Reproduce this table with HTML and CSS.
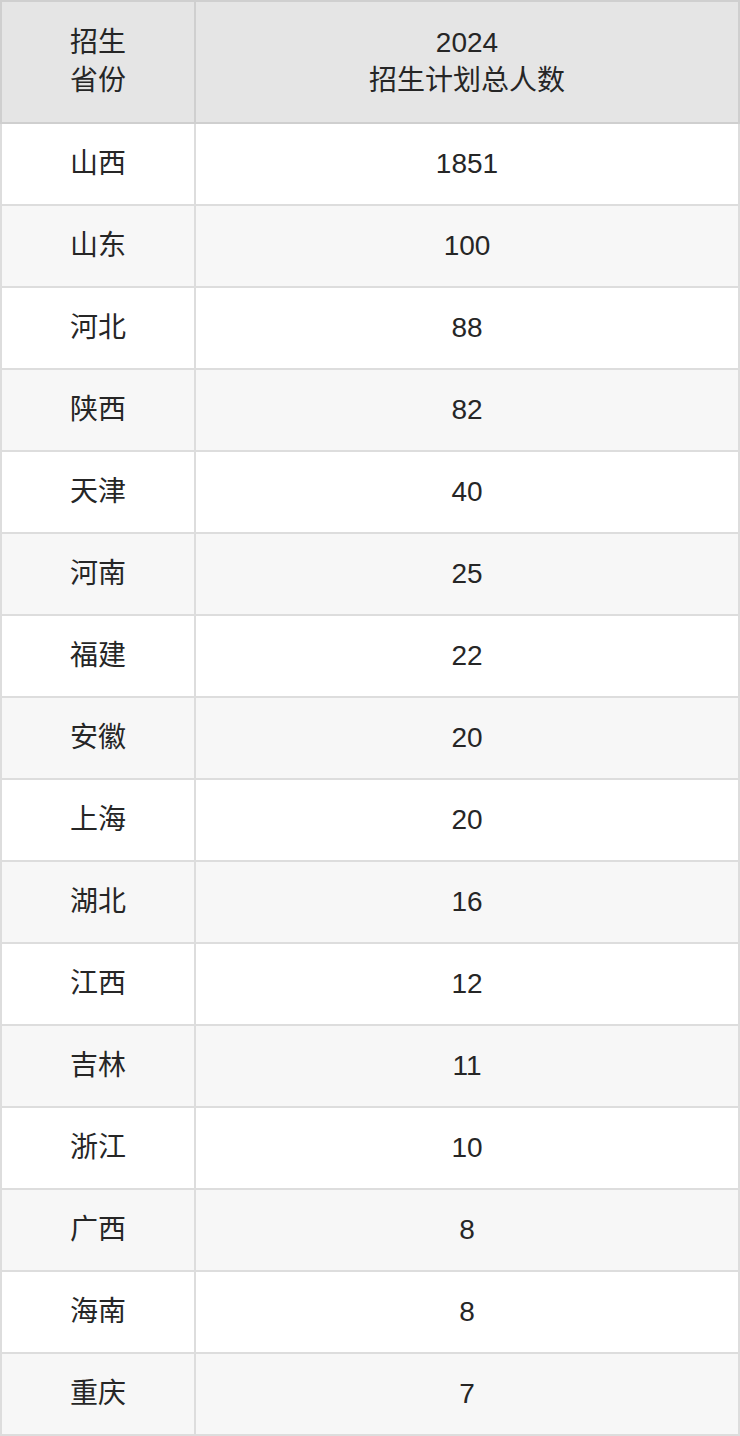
FILE: index.html
```html
<!DOCTYPE html>
<html lang="zh">
<head>
<meta charset="utf-8">
<link rel="stylesheet" href="styles.css">
</head>
<body>
<table class="plan">
  <thead>
    <tr><th class="prov">招生<br>省份</th><th class="num">2024<br>招生计划总人数</th></tr>
  </thead>
  <tbody>
    <tr><td>山西</td><td>1851</td></tr>
    <tr><td>山东</td><td>100</td></tr>
    <tr><td>河北</td><td>88</td></tr>
    <tr><td>陕西</td><td>82</td></tr>
    <tr><td>天津</td><td>40</td></tr>
    <tr><td>河南</td><td>25</td></tr>
    <tr><td>福建</td><td>22</td></tr>
    <tr><td>安徽</td><td>20</td></tr>
    <tr><td>上海</td><td>20</td></tr>
    <tr><td>湖北</td><td>16</td></tr>
    <tr><td>江西</td><td>12</td></tr>
    <tr><td>吉林</td><td>11</td></tr>
    <tr><td>浙江</td><td>10</td></tr>
    <tr><td>广西</td><td>8</td></tr>
    <tr><td>海南</td><td>8</td></tr>
    <tr><td>重庆</td><td>7</td></tr>
  </tbody>
</table>
</body>
</html>
```
FILE: styles.css
```css
html, body {
  margin: 0;
  padding: 0;
  background: #ffffff;
}
.plan {
  width: 740px;
  border-collapse: collapse;
  table-layout: fixed;
  font-family: "Liberation Sans", "Noto Sans CJK SC", sans-serif;
  font-size: 28px;
  color: #262626;
}
.plan th, .plan td {
  text-align: center;
  vertical-align: middle;
  padding: 0;
  font-weight: normal;
}
.plan th {
  background: #e5e5e5;
  border: 2px solid #cfcfcf;
  height: 120px;
  line-height: 38px;
}
.plan th.prov { width: 192px; }
.plan td {
  border: 2px solid #dddddd;
  height: 80px;
  line-height: 32px;
}
.plan tbody tr:nth-child(even) td {
  background: #f7f7f7;
}
```
